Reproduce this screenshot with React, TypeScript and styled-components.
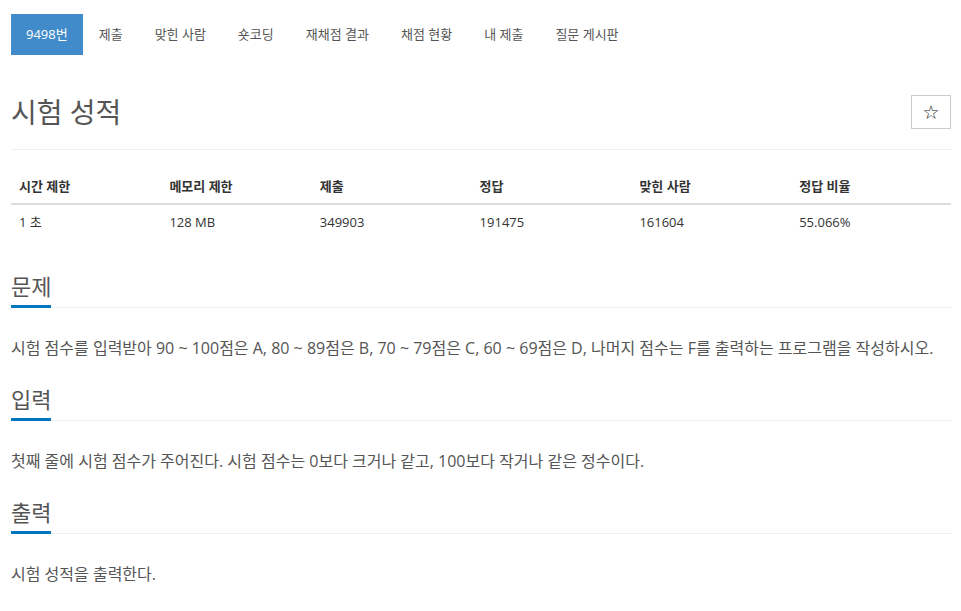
import styled, { createGlobalStyle } from "styled-components";

const GlobalStyle = createGlobalStyle`
  body {
    margin: 0;
    background: #fff;
    font-family: "Open Sans", "Noto Sans CJK KR", sans-serif;
    color: #333;
  }
`;

const Page = styled.div`
  padding: 14px 10px 0 11px;
  width: 940px;
`;

const Nav = styled.ul`
  display: flex;
  margin: 0;
  padding: 0;
  list-style: none;
`;

const NavItem = styled.li<{ active?: boolean }>`
  height: 41px;
  line-height: 41px;
  padding: 0 ${(p) => (p.active ? "15px" : "16px")};
  font-size: 13px;
  color: ${(p) => (p.active ? "#fff" : "#555")};
  background-color: ${(p) => (p.active ? "#428bca" : "transparent")};
`;

const TitleRow = styled.div`
  display: flex;
  align-items: center;
  justify-content: space-between;
  margin-top: 39px;
  padding-bottom: 19px;
  border-bottom: 1px solid #eee;
`;

const Title = styled.h1`
  margin: 0;
  font-size: 28px;
  line-height: 36px;
  font-weight: 400;
  color: #555;
`;

const StarButton = styled.button`
  width: 40px;
  height: 34px;
  border: 1px solid #ccc;
  background: #fff;
  font-family: "DejaVu Sans", sans-serif;
  font-size: 19px;
  line-height: 1;
  color: #222;
  padding: 0;
`;

const InfoTable = styled.table`
  width: 100%;
  margin-top: 19px;
  border-collapse: collapse;
  font-size: 13px;
  th,
  td {
    text-align: left;
    padding: 8px;
    line-height: 18px;
  }
  th {
    font-weight: 700;
    border-bottom: 2px solid #ddd;
  }
`;

const Section = styled.section<{ first?: boolean }>`
  margin-top: ${(p) => (p.first ? "32px" : "24px")};
`;

const SectionHeader = styled.div`
  display: flex;
  border-bottom: 1px dotted #dde3ea;
`;

const SectionTitle = styled.h2`
  margin: 0 0 -1px;
  width: 40px;
  padding-bottom: 4px;
  border-bottom: 3px solid #0076c0;
  font-size: 22px;
  line-height: 30px;
  font-weight: 400;
  color: #555;
  white-space: nowrap;
`;

const Text = styled.p`
  margin: 28px 0 0;
  font-size: 16px;
  line-height: 24px;
  color: #555;
`;

const tabs = ["제출", "맞힌 사람", "숏코딩", "재채점 결과", "채점 현황", "내 제출", "질문 게시판"];

const stats = [
  { label: "시간 제한", value: "1 초", width: "16%" },
  { label: "메모리 제한", value: "128 MB", width: "16%" },
  { label: "제출", value: "349903", width: "17%" },
  { label: "정답", value: "191475", width: "17%" },
  { label: "맞힌 사람", value: "161604", width: "17%" },
  { label: "정답 비율", value: "55.066%", width: "17%" },
];

const sections = [
  {
    title: "문제",
    body: "시험 점수를 입력받아 90 ~ 100점은 A, 80 ~ 89점은 B, 70 ~ 79점은 C, 60 ~ 69점은 D, 나머지 점수는 F를 출력하는 프로그램을 작성하시오.",
  },
  {
    title: "입력",
    body: "첫째 줄에 시험 점수가 주어진다. 시험 점수는 0보다 크거나 같고, 100보다 작거나 같은 정수이다.",
  },
  { title: "출력", body: "시험 성적을 출력한다." },
];

export default function App() {
  return (
    <Page>
      <GlobalStyle />
      <Nav>
        <NavItem active>9498번</NavItem>
        {tabs.map((t) => (
          <NavItem key={t}>{t}</NavItem>
        ))}
      </Nav>
      <TitleRow>
        <Title>시험 성적</Title>
        <StarButton>☆</StarButton>
      </TitleRow>
      <InfoTable>
        <thead>
          <tr>
            {stats.map((s) => (
              <th key={s.label} style={{ width: s.width }}>
                {s.label}
              </th>
            ))}
          </tr>
        </thead>
        <tbody>
          <tr>
            {stats.map((s) => (
              <td key={s.label}>{s.value}</td>
            ))}
          </tr>
        </tbody>
      </InfoTable>
      {sections.map((s, i) => (
        <Section key={s.title} first={i === 0}>
          <SectionHeader>
            <SectionTitle>{s.title}</SectionTitle>
          </SectionHeader>
          <Text>{s.body}</Text>
        </Section>
      ))}
    </Page>
  );
}
